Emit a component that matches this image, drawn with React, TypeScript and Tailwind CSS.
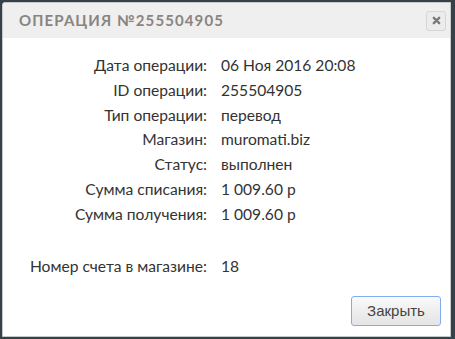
import React from 'react';

const ROWS: [string, string][] = [
  ['Дата операции:', '06 Ноя 2016 20:08'],
  ['ID операции:', '255504905'],
  ['Тип операции:', 'перевод'],
  ['Магазин:', 'muromati.biz'],
  ['Статус:', 'выполнен'],
  ['Сумма списания:', '1 009.60 р'],
  ['Сумма получения:', '1 009.60 р'],
];

export default function App() {
  return (
    <div className="w-[455px] h-[339px] bg-[#34434a] pt-[2px] pl-[2px] overflow-hidden">
      <div className="w-[449px] h-[335px] bg-white rounded-tl-[3px] flex flex-col border border-[#c9c9c9]">
        {/* Header */}
        <div className="h-[35px] bg-[#efefef] flex items-center justify-between pl-[16px] pr-[4px] shrink-0">
          <h1 className="text-[15px] font-bold tracking-[1.1px] text-[#8a847e] font-['Lato',sans-serif]">
            ОПЕРАЦИЯ №255504905
          </h1>
          <button className="w-[20px] h-[20px] rounded-[3px] border border-[#d6d6d6] bg-[#ececec] flex items-center justify-center">
            <svg width="9" height="9" viewBox="0 0 10 10">
              <path d="M2 2 L8 8 M8 2 L2 8" stroke="#7a7a7a" strokeWidth="2.6" strokeLinecap="round" />
            </svg>
          </button>
        </div>

        {/* Body */}
        <div className="flex-1 pt-[15px] font-['Lato',sans-serif] text-[15.6px] text-[#333]">
          <div className="grid grid-cols-[204px_1fr] gap-x-[14px] leading-[24.8px]">
            {ROWS.map(([label, value]) => (
              <React.Fragment key={label}>
                <div className="text-right">{label}</div>
                <div>{value}</div>
              </React.Fragment>
            ))}
            <div className="h-[27px]" />
            <div className="h-[27px]" />
            <div className="text-right">Номер счета в магазине:</div>
            <div>18</div>
          </div>
        </div>

        {/* Footer */}
        <div className="flex justify-end pr-[9px] pb-[10px]">
          <button className="w-[90px] h-[30px] rounded-[3px] border border-[#7eaef0] bg-gradient-to-b from-[#fafafa] to-[#e4e4e4] text-[15px] text-[#444] font-['Liberation_Sans',sans-serif]">
            Закрыть
          </button>
        </div>
      </div>
    </div>
  );
}
